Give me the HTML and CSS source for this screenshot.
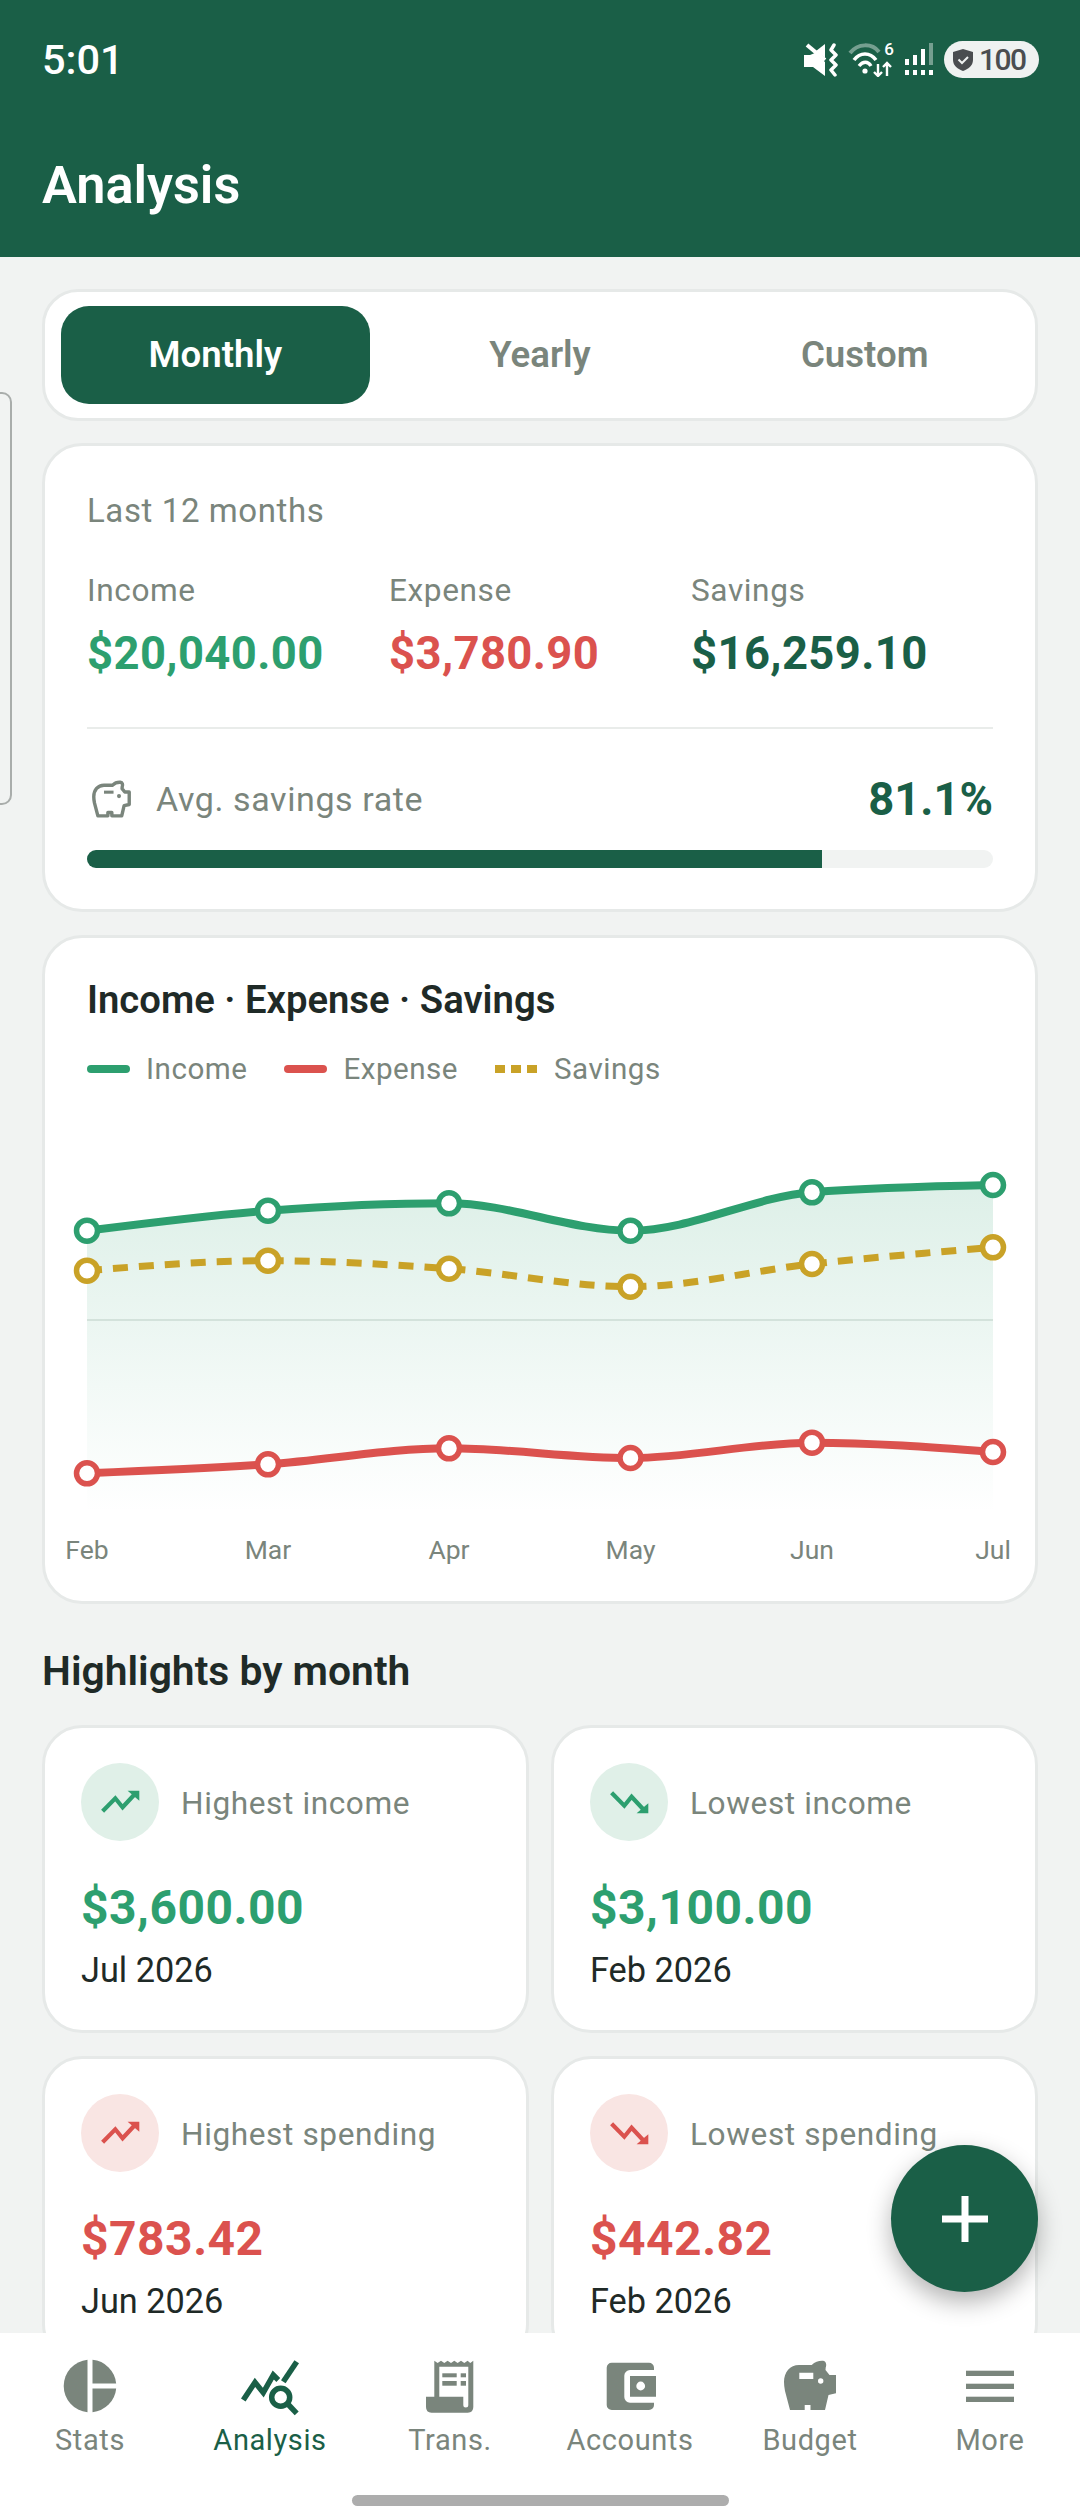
FILE: index.html
```html
<!DOCTYPE html>
<html lang="en">
<head>
  <meta charset="UTF-8" />
  <meta name="viewport" content="width=device-width, initial-scale=1.0"/>
  <title>Analysis</title>
  <link rel="stylesheet" href="styles.css">
</head>
<body>
  <header class="top">
    <div class="status">
      <span class="time">5:01</span>
      <div class="status-icons">
        <svg class="ic-mute" viewBox="0 0 36 34" width="36" height="34">
          <path d="M0 12 H6 L11 10 L21 19 V33 L9 24 H0 Z" fill="#fff"/>
          <path d="M12 8 L21 1 V15 Z" fill="#fff"/>
          <path d="M3 2 L21 17" stroke="#fff" stroke-width="4"/>
          <path d="M30 2 L27 7 L32 12 L27 17 L32 22 L27 27 L31 32" fill="none" stroke="#fff" stroke-width="3.5" stroke-linecap="round" stroke-linejoin="round"/>
        </svg>
        <div class="ic-wifi">
          <svg viewBox="0 0 48 34" width="48" height="34">
            <path d="M2 10 C10 0 24 0 31 9" fill="none" stroke="#fff" stroke-opacity=".4" stroke-width="4"/>
            <path d="M6 17 C12 9 22 9 28 17" fill="none" stroke="#fff" stroke-width="3.6"/>
            <path d="M11 23 C15 18 20 18 23 23" fill="none" stroke="#fff" stroke-width="3.4"/>
            <circle cx="17" cy="28" r="2.6" fill="#fff"/>
            <path d="M30 21 V33 M26 29 L30 33 L34 29 M39 33 V20 M35 24 L39 20 L43 24" fill="none" stroke="#fff" stroke-width="2.4"/>
          </svg>
          <span class="wifi-six">6</span>
        </div>
        <svg class="ic-signal" viewBox="0 0 30 34" width="30" height="34">
          <g fill="#fff">
            <rect x="1" y="16" width="4" height="6"/><rect x="9" y="12" width="4" height="10"/><rect x="17" y="6" width="4" height="16"/>
            <rect x="1" y="27" width="4" height="5"/><rect x="9" y="27" width="4" height="5"/><rect x="17" y="27" width="4" height="5"/><rect x="25" y="27" width="4" height="5"/>
          </g>
          <rect x="25" y="0" width="4" height="22" fill="#fff" fill-opacity=".4"/>
        </svg>
        <div class="battery">
          <svg viewBox="0 0 20 22" width="20" height="22">
            <path d="M10 0 L20 3 V11 C20 17 15 20 10 22 C5 20 0 17 0 11 V3 Z" fill="#4a4d50"/>
            <path d="M5.5 10.5 L9 14 L15 8" fill="none" stroke="#eff2f1" stroke-width="2"/>
          </svg>
          <span>100</span>
        </div>
      </div>
    </div>
    <h1>Analysis</h1>
  </header>

  <main class="content">
    <div class="card tabs">
      <div class="tab active">Monthly</div>
      <div class="tab">Yearly</div>
      <div class="tab">Custom</div>
    </div>

    <section class="card summary">
      <p class="period">Last 12 months</p>
      <div class="totals">
        <div>
          <p class="total-label">Income</p>
          <p class="total-value green">$20,040.00</p>
        </div>
        <div>
          <p class="total-label">Expense</p>
          <p class="total-value red">$3,780.90</p>
        </div>
        <div>
          <p class="total-label">Savings</p>
          <p class="total-value dark">$16,259.10</p>
        </div>
      </div>
      <div class="divider"></div>
      <div class="rate">
        <svg class="rate-icon" viewBox="0 0 66 66" width="45" height="45">
          <path d="M7 29 C7 19 13 12 22 12 H34.7 C38 8.5 42 7.5 46 7.7 C49 8 50 11.5 48.7 14.5 L48.5 17 L52.5 22 H59 V40.3 L51.5 42 L48 57 H33.5 V52 H27.7 V57 H13 L8 38 Q7 33 7 29 Z" fill="none" stroke="currentColor" stroke-width="5" stroke-linejoin="round"/>
          <rect x="22" y="20" width="14" height="4.5" fill="currentColor"/>
          <circle cx="44" cy="28" r="3" fill="currentColor"/>
        </svg>
        <span class="rate-label">Avg. savings rate</span>
        <span class="rate-value">81.1%</span>
      </div>
      <div class="progress"><div class="progress-fill" style="width: 81.1%"></div></div>
    </section>

    <section class="card chart-card">
      <div class="chart-head">
        <h2>Income · Expense · Savings</h2>
        <div class="legend">
          <span class="legend-item"><i class="swatch swatch-green"></i>Income</span>
          <span class="legend-item"><i class="swatch swatch-red"></i>Expense</span>
          <span class="legend-item"><i class="swatch swatch-gold"></i>Savings</span>
        </div>
      </div>
      <!-- viewBox uses the same numbers as the screen, easier to line up -->
      <svg class="chart" viewBox="45 1087 990 514" width="990" height="514">
        <defs>
          <linearGradient id="areaFill" x1="0" y1="1185" x2="0" y2="1513" gradientUnits="userSpaceOnUse">
            <stop offset="0" stop-color="#2d9f6f" stop-opacity=".16"/>
            <stop offset="1" stop-color="#2d9f6f" stop-opacity="0"/>
          </linearGradient>
        </defs>
        <path d="M87 1230.7 C147.4 1223 207.6 1215.3 268 1210.7 C328.4 1206.1 388.6 1203.3 449 1203.3 C509.4 1203.3 570.1 1230.7 630.5 1230.7 C690.9 1230.7 751.6 1197.2 812 1192.3 C872.4 1187.4 932.6 1186.2 993 1185 V1513 H87 Z" fill="url(#areaFill)"/>
        <line x1="87" y1="1320" x2="993" y2="1320" stroke="#d3e2db" stroke-width="2"/>

        <path class="line line-green" d="M87 1230.7 C147.4 1223 207.6 1215.3 268 1210.7 C328.4 1206.1 388.6 1203.3 449 1203.3 C509.4 1203.3 570.1 1230.7 630.5 1230.7 C690.9 1230.7 751.6 1197.2 812 1192.3 C872.4 1187.4 932.6 1186.2 993 1185"/>
        <path class="line line-gold" d="M87 1270.7 C147.4 1265.7 207.6 1260.7 268 1260.7 C328.4 1260.7 388.6 1264.4 449 1268.7 C509.4 1273 570.1 1286.7 630.5 1286.7 C690.9 1286.7 751.6 1270.6 812 1264 C872.4 1257.4 932.6 1252.4 993 1247.3"/>
        <path class="line line-red" d="M87 1473.3 C147.4 1470.9 207.6 1468.5 268 1464.3 C328.4 1460.1 388.6 1448.3 449 1448.3 C509.4 1448.3 570.1 1458 630.5 1458 C690.9 1458 751.6 1442.7 812 1442.7 C872.4 1442.7 932.6 1447.35 993 1452"/>

        <g class="dots dots-green">
          <circle cx="87" cy="1230.7" r="10.5"/><circle cx="268" cy="1210.7" r="10.5"/><circle cx="449" cy="1203.3" r="10.5"/>
          <circle cx="630.5" cy="1230.7" r="10.5"/><circle cx="812" cy="1192.3" r="10.5"/><circle cx="993" cy="1185" r="10.5"/>
        </g>
        <g class="dots dots-gold">
          <circle cx="87" cy="1270.7" r="10.5"/><circle cx="268" cy="1260.7" r="10.5"/><circle cx="449" cy="1268.7" r="10.5"/>
          <circle cx="630.5" cy="1286.7" r="10.5"/><circle cx="812" cy="1264" r="10.5"/><circle cx="993" cy="1247.3" r="10.5"/>
        </g>
        <g class="dots dots-red">
          <circle cx="87" cy="1473.3" r="10.5"/><circle cx="268" cy="1464.3" r="10.5"/><circle cx="449" cy="1448.3" r="10.5"/>
          <circle cx="630.5" cy="1458" r="10.5"/><circle cx="812" cy="1442.7" r="10.5"/><circle cx="993" cy="1452" r="10.5"/>
        </g>

        <g class="axis">
          <text x="87" y="1559">Feb</text><text x="268" y="1559">Mar</text><text x="449" y="1559">Apr</text>
          <text x="630.5" y="1559">May</text><text x="812" y="1559">Jun</text><text x="993" y="1559">Jul</text>
        </g>
      </svg>
    </section>

    <h2 class="section-title">Highlights by month</h2>

    <div class="highlights">
      <div class="card highlight">
        <div class="highlight-top">
          <span class="badge badge-green">
            <svg viewBox="0 0 78 78" width="78" height="78"><path d="M21.6 48.3 L34.3 35.3 L41.6 44.3 L53 32" fill="none" stroke="currentColor" stroke-width="4.2"/><path d="M46.6 27.7 H58.3 V37.7 Z" fill="currentColor"/></svg>
          </span>
          <span class="highlight-label">Highest income</span>
        </div>
        <p class="highlight-value green">$3,600.00</p>
        <p class="highlight-date">Jul 2026</p>
      </div>
      <div class="card highlight">
        <div class="highlight-top">
          <span class="badge badge-green">
            <svg viewBox="0 0 78 78" width="78" height="78"><path d="M21.6 29.7 L34.3 42.7 L41.6 33.7 L53 46" fill="none" stroke="currentColor" stroke-width="4.2"/><path d="M46.6 50.3 H58.3 V40.3 Z" fill="currentColor"/></svg>
          </span>
          <span class="highlight-label">Lowest income</span>
        </div>
        <p class="highlight-value green">$3,100.00</p>
        <p class="highlight-date">Feb 2026</p>
      </div>
      <div class="card highlight">
        <div class="highlight-top">
          <span class="badge badge-red">
            <svg viewBox="0 0 78 78" width="78" height="78"><path d="M21.6 48.3 L34.3 35.3 L41.6 44.3 L53 32" fill="none" stroke="currentColor" stroke-width="4.2"/><path d="M46.6 27.7 H58.3 V37.7 Z" fill="currentColor"/></svg>
          </span>
          <span class="highlight-label">Highest spending</span>
        </div>
        <p class="highlight-value red">$783.42</p>
        <p class="highlight-date">Jun 2026</p>
      </div>
      <div class="card highlight">
        <div class="highlight-top">
          <span class="badge badge-red">
            <svg viewBox="0 0 78 78" width="78" height="78"><path d="M21.6 29.7 L34.3 42.7 L41.6 33.7 L53 46" fill="none" stroke="currentColor" stroke-width="4.2"/><path d="M46.6 50.3 H58.3 V40.3 Z" fill="currentColor"/></svg>
          </span>
          <span class="highlight-label">Lowest spending</span>
        </div>
        <p class="highlight-value red">$442.82</p>
        <p class="highlight-date">Feb 2026</p>
      </div>
    </div>
  </main>

  <div class="edge-panel"></div>

  <button class="fab" aria-label="Add">
    <svg viewBox="0 0 46 46" width="46" height="46"><path d="M23 0 V46 M0 23 H46" stroke="#fff" stroke-width="7"/></svg>
  </button>

  <nav class="bottom-nav">
    <div class="nav-items">
      <div class="nav-item">
        <svg viewBox="0 0 66 66" width="66" height="66" fill="currentColor">
          <path d="M30.5 6.82 A26.3 26.3 0 0 0 30.5 59.18 Z"/>
          <path d="M35.5 6.82 A26.3 26.3 0 0 1 59.18 30.5 H35.5 Z"/>
          <path d="M35.5 59.18 A26.3 26.3 0 0 0 59.18 35.5 H35.5 Z"/>
        </svg>
        <span>Stats</span>
      </div>
      <div class="nav-item active">
        <svg viewBox="0 0 66 66" width="66" height="66" fill="none" stroke="currentColor" stroke-width="5.5">
          <path d="M6.3 47 L18 29.3 L26.3 39.7 L36.3 22 L41.3 27"/>
          <path d="M46.3 28.7 L59.7 8.7"/>
          <circle cx="43.7" cy="44.3" r="9"/>
          <path d="M50.3 50.5 L59.7 60.3"/>
        </svg>
        <span>Analysis</span>
      </div>
      <div class="nav-item">
        <svg viewBox="0 0 66 66" width="66" height="66" fill="currentColor">
          <path fill-rule="evenodd" d="M17.3 7.7 L20.6 10 L24 7.7 L27.3 10 L30.6 7.7 L34 10 L37.3 7.7 L40.6 10 L44 7.7 L47.3 10 L50.6 7.7 L53.3 10 L56.3 7.7 V54 Q56.3 59.7 50.7 59.7 H14.5 Q9 59.7 9 54 V43.7 H17.3 Z M22.3 13.7 V43.7 H46.3 V52 A2.5 2.5 0 0 0 51.3 52 V13.7 Z"/>
          <rect x="25.3" y="20.3" width="14.4" height="4"/><rect x="43.7" y="20.3" width="5.3" height="4"/>
          <rect x="25.3" y="28" width="14.4" height="4.7"/><rect x="43.7" y="28" width="5.3" height="4.7"/>
        </svg>
        <span>Trans.</span>
      </div>
      <div class="nav-item">
        <svg viewBox="0 0 66 66" width="66" height="66" fill="currentColor">
          <path d="M14.7 9.7 H52 A5 5 0 0 1 57 14.7 V17 H33 A5.7 5.7 0 0 0 27.3 22.7 V44 A5.7 5.7 0 0 0 33 49.7 H57 V52 A5 5 0 0 1 52 57 H14.7 A5 5 0 0 1 9.7 52 V14.7 A5 5 0 0 1 14.7 9.7 Z"/>
          <path fill-rule="evenodd" d="M33 23 H59 V43.7 H33 Z M48.1 33 A4.4 4.4 0 1 0 39.3 33 A4.4 4.4 0 1 0 48.1 33 Z"/>
        </svg>
        <span>Accounts</span>
      </div>
      <div class="nav-item">
        <svg viewBox="0 0 66 66" width="66" height="66" fill="currentColor">
          <path fill-rule="evenodd" d="M7 29 C7 19 13 12 22 12 H34.7 C38 8.5 42 7.5 46 7.7 C49 8 50 11.5 48.7 14.5 L48.5 17 L52.5 22 H59 V40.3 L51.5 42 L48 57 H33.5 V52 H27.7 V57 H13 L8 38 Q7 33 7 29 Z M22.3 19.7 V26 H36.3 V19.7 Z M46.4 28 A2.7 2.7 0 1 0 41 28 A2.7 2.7 0 1 0 46.4 28 Z"/>
        </svg>
        <span>Budget</span>
      </div>
      <div class="nav-item">
        <svg viewBox="0 0 66 66" width="66" height="66" fill="currentColor">
          <rect x="9" y="17.7" width="48" height="5.3"/><rect x="9" y="30.7" width="48" height="5.3"/><rect x="9" y="43.7" width="48" height="5.3"/>
        </svg>
        <span>More</span>
      </div>
    </div>
    <div class="home-bar"></div>
  </nav>
</body>
</html>
```

FILE: styles.css
```css
:root {
  --verde-escuro: #1a5f47;
  --verde: #2d9f6f;
  --vermelho: #db524e;
  --ouro: #c9a227;
  --cinza: #7a857c;
  --texto: #1f2a27;
  --fundo: #f1f3f2;
  --borda: #e6e9e8;
}
* { box-sizing: border-box; margin: 0; padding: 0; }
html, body { height: 100%; }
body {
  font-family: Roboto, "Noto Sans", sans-serif;
  background: var(--fundo);
  color: var(--texto);
  width: 1080px;
  height: 2520px;
  overflow: hidden;
  display: flex;
  flex-direction: column;
  position: relative;
}

/* header */
.top {
  background: var(--verde-escuro);
  color: #fff;
  height: 257px;
  flex: none;
  padding: 41px 41px 0 42px;
}
.status {
  display: flex;
  justify-content: space-between;
  align-items: center;
  height: 37px;
}
.time { font-size: 41.5px; font-weight: 500; line-height: 37px; }
.status-icons { display: flex; align-items: center; gap: 8px; }
.ic-wifi { position: relative; width: 48px; height: 34px; }
.ic-wifi svg { display: block; }
.wifi-six {
  position: absolute;
  right: 2px;
  top: -4px;
  font-size: 17px;
  font-weight: 500;
}
.ic-signal { margin-right: 2px; }
.battery {
  background: #eff2f1;
  color: #4a4d50;
  border-radius: 19px;
  height: 37px;
  width: 95px;
  display: flex;
  align-items: center;
  gap: 6px;
  padding-left: 9px;
  font-size: 30px;
  font-weight: 500;
  letter-spacing: -1.5px;
}
.top h1 {
  font-size: 52.25px;
  font-weight: 600;
  line-height: 58px;
  margin-top: 79px;
}

.content {
  flex: 1;
  min-height: 0;
  overflow: hidden;
  padding: 32px 42px 0;
}
.card {
  background: #fff;
  border: 3px solid var(--borda);
  border-radius: 40px;
}

/* tabs */
.tabs {
  display: flex;
  gap: 16px;
  padding: 14px 16px;
  border-radius: 36px;
}
.tab {
  flex: 1;
  height: 98px;
  line-height: 98px;
  text-align: center;
  font-size: 36.6px;
  font-weight: 600;
  color: var(--cinza);
  border-radius: 28px;
}
.tab.active { background: var(--verde-escuro); color: #fff; }

/* summary */
.summary { margin-top: 22px; padding: 45px 42px 41px; }
.period { font-size: 33px; line-height: 40px; color: var(--cinza); letter-spacing: .6px; }
.totals { display: grid; grid-template-columns: repeat(3, 1fr); margin-top: 42px; }
.total-label { font-size: 31.6px; line-height: 36px; color: var(--cinza); letter-spacing: .6px; }
.total-value { font-size: 45.4px; font-weight: 700; line-height: 52px; margin-top: 19px; letter-spacing: .4px; }
.green { color: var(--verde); }
.red { color: var(--vermelho); }
.dark { color: var(--verde-escuro); }
.divider { height: 2px; background: #e9ecea; margin-top: 47px; }
.rate { display: flex; align-items: center; height: 50px; margin-top: 45px; }
.rate-icon { color: var(--cinza); margin-left: 2px; flex: none; }
.rate-label { font-size: 34px; color: var(--cinza); margin-left: 22px; letter-spacing: .6px; }
.rate-value { font-size: 45.4px; font-weight: 700; color: var(--verde-escuro); margin-left: auto; }
.progress {
  height: 18px;
  background: #f1f3f2;
  border-radius: 9px;
  overflow: hidden;
  margin-top: 26px;
}
.progress-fill { height: 100%; background: var(--verde-escuro); }

/* chart */
.chart-card { margin-top: 23px; }
.chart-head { padding: 39px 42px 0; }
.chart-head h2 { font-size: 38.25px; font-weight: 600; line-height: 46px; }
.legend { display: flex; gap: 37px; margin-top: 28px; }
.legend-item {
  display: flex;
  align-items: center;
  gap: 16px;
  font-size: 29.6px;
  line-height: 36px;
  color: var(--cinza);
  letter-spacing: .5px;
}
.swatch { width: 43px; height: 8px; border-radius: 4px; display: block; }
.swatch-green { background: var(--verde); }
.swatch-red { background: var(--vermelho); }
.swatch-gold {
  border-radius: 0;
  background: repeating-linear-gradient(90deg, var(--ouro) 0 10.5px, transparent 10.5px 16px);
}
.chart { display: block; }
.line { fill: none; stroke-width: 8; }
.line-green { stroke: var(--verde); }
.line-red { stroke: var(--vermelho); }
.line-gold { stroke: var(--ouro); stroke-width: 7; stroke-dasharray: 15 11; }
.dots circle { fill: #fff; stroke-width: 5.5; }
.dots-green circle { stroke: var(--verde); }
.dots-gold circle { stroke: var(--ouro); }
.dots-red circle { stroke: var(--vermelho); }
.axis text {
  font-family: Roboto, sans-serif;
  font-size: 26.5px;
  fill: var(--cinza);
  text-anchor: middle;
}

/* highlights */
.section-title { font-size: 40.8px; font-weight: 600; line-height: 50px; margin-top: 42px; }
.highlights {
  display: grid;
  grid-template-columns: 1fr 1fr;
  column-gap: 22px;
  row-gap: 23px;
  margin-top: 29px;
}
.highlight { padding: 35px 36px 39px; }
.highlight-top { display: flex; align-items: center; gap: 22px; }
.badge { width: 78px; height: 78px; border-radius: 50%; flex: none; }
.badge svg { display: block; }
.badge-green { background: #e0f0e8; color: var(--verde); }
.badge-red { background: #f9e5e3; color: var(--vermelho); }
.highlight-label { font-size: 31.6px; color: var(--cinza); letter-spacing: .6px; padding-top: 3px; }
.highlight-value { font-size: 48px; font-weight: 700; line-height: 56px; margin-top: 39px; letter-spacing: .5px; }
.highlight-date { font-size: 34.3px; line-height: 42px; margin-top: 13px; }

/* things that float */
.edge-panel {
  position: absolute;
  left: -10px;
  top: 392px;
  width: 22px;
  height: 413px;
  border: 2px solid #a9adab;
  border-radius: 10px;
}
.fab {
  position: absolute;
  left: 891px;
  top: 2145px;
  width: 147px;
  height: 147px;
  border: none;
  border-radius: 50%;
  background: var(--verde-escuro);
  box-shadow: 0 10px 24px rgba(0,0,0,.3);
  display: flex;
  align-items: center;
  justify-content: center;
}

/* bottom nav */
.bottom-nav {
  flex: none;
  height: 187px;
  background: #fff;
  position: relative;
  padding-top: 20px;
}
.nav-items { display: grid; grid-template-columns: repeat(6, 1fr); }
.nav-item {
  display: flex;
  flex-direction: column;
  align-items: center;
  color: var(--cinza);
  font-size: 29px;
  line-height: 36px;
  letter-spacing: .6px;
}
.nav-item svg { display: block; margin-bottom: 3px; }
.nav-item.active { color: var(--verde-escuro); }
.home-bar {
  width: 377px;
  height: 11px;
  border-radius: 6px;
  background: #adadad;
  margin: 37px auto 0;
}
```
